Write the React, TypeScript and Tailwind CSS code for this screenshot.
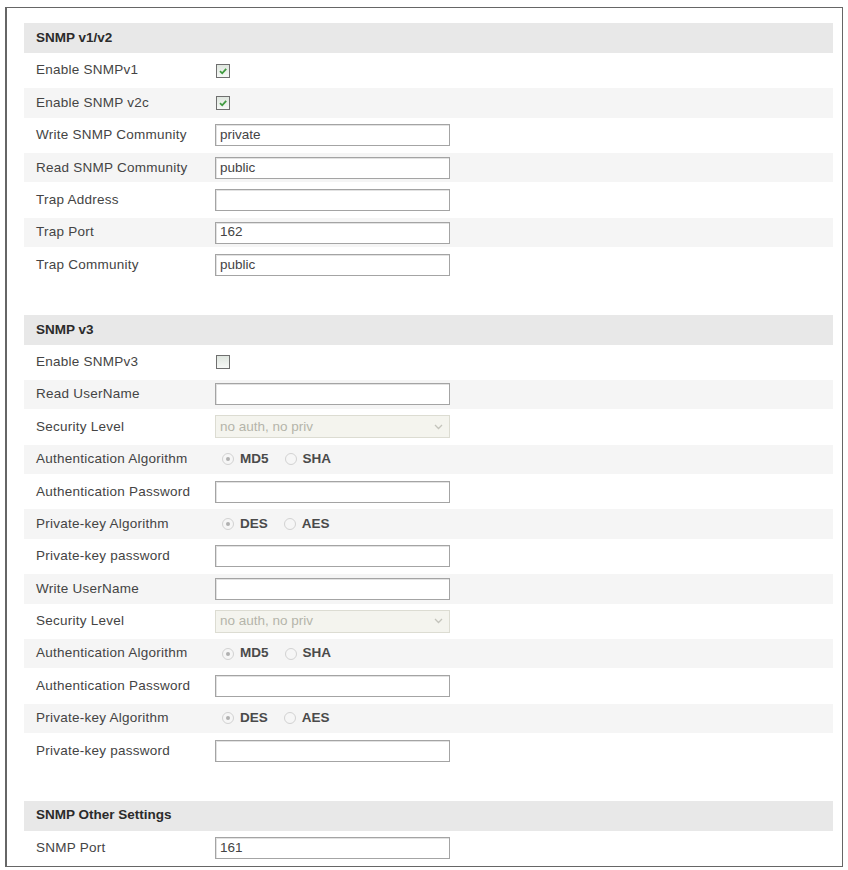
type Field =
  | { kind: "check"; label: string; checked: boolean }
  | { kind: "text"; label: string; value?: string }
  | { kind: "select"; label: string; value: string }
  | { kind: "radio"; label: string; options: [string, string] };

type Section = { title: string; fields: Field[] };

const sections: Section[] = [
  {
    title: "SNMP v1/v2",
    fields: [
      { kind: "check", label: "Enable SNMPv1", checked: true },
      { kind: "check", label: "Enable SNMP v2c", checked: true },
      { kind: "text", label: "Write SNMP Community", value: "private" },
      { kind: "text", label: "Read SNMP Community", value: "public" },
      { kind: "text", label: "Trap Address" },
      { kind: "text", label: "Trap Port", value: "162" },
      { kind: "text", label: "Trap Community", value: "public" },
    ],
  },
  {
    title: "SNMP v3",
    fields: [
      { kind: "check", label: "Enable SNMPv3", checked: false },
      { kind: "text", label: "Read UserName" },
      { kind: "select", label: "Security Level", value: "no auth, no priv" },
      { kind: "radio", label: "Authentication Algorithm", options: ["MD5", "SHA"] },
      { kind: "text", label: "Authentication Password" },
      { kind: "radio", label: "Private-key Algorithm", options: ["DES", "AES"] },
      { kind: "text", label: "Private-key password" },
      { kind: "text", label: "Write UserName" },
      { kind: "select", label: "Security Level", value: "no auth, no priv" },
      { kind: "radio", label: "Authentication Algorithm", options: ["MD5", "SHA"] },
      { kind: "text", label: "Authentication Password" },
      { kind: "radio", label: "Private-key Algorithm", options: ["DES", "AES"] },
      { kind: "text", label: "Private-key password" },
    ],
  },
  {
    title: "SNMP Other Settings",
    fields: [{ kind: "text", label: "SNMP Port", value: "161" }],
  },
];

function Checkbox({ checked }: { checked: boolean }) {
  return (
    <div className="ml-[1px] flex h-[14px] w-[14px] items-center justify-center border border-[#6f6f6f] bg-gradient-to-b from-[#dfe6df] to-[#f6f8f6]">
      {checked && (
        <svg width="10" height="10" viewBox="0 0 10 10">
          <path d="M2 5.2 L4.2 7.3 L8.2 2.8" fill="none" stroke="#3f9a3f" strokeWidth="1.8" />
        </svg>
      )}
    </div>
  );
}

function Radio({ on }: { on: boolean }) {
  return (
    <div className="flex h-[12px] w-[12px] items-center justify-center rounded-full border border-[#d2d2d2] bg-[#f6f6f6]">
      {on && <div className="h-[4px] w-[4px] rounded-full bg-[#b0b0b0]" />}
    </div>
  );
}

function Control({ field }: { field: Field }) {
  switch (field.kind) {
    case "check":
      return <Checkbox checked={field.checked} />;
    case "text":
      return (
        <div className="flex h-[22px] w-[235px] items-center border border-[#a4a4a4] bg-white px-[4px] text-[#444] shadow-[inset_1px_1px_0_#e2e2e2]">
          {field.value}
        </div>
      );
    case "select":
      return (
        <div className="flex h-[23px] w-[235px] items-center justify-between border border-[#dcdcd2] bg-[#f4f4ee] pl-[4px] pr-[6px] text-[#b4b4aa]">
          <span>{field.value}</span>
          <svg width="9" height="6" viewBox="0 0 9 6">
            <path d="M1 1 L4.5 4.5 L8 1" fill="none" stroke="#c4c4bc" strokeWidth="1.3" />
          </svg>
        </div>
      );
    case "radio":
      return (
        <div className="flex items-center pl-[7px] font-bold text-[#4a4a4a]">
          <Radio on />
          <span className="ml-[6px]">{field.options[0]}</span>
          <div className="ml-[16px]">
            <Radio on={false} />
          </div>
          <span className="ml-[6px]">{field.options[1]}</span>
        </div>
      );
  }
}

function FieldRow({ field, shaded }: { field: Field; shaded: boolean }) {
  return (
    <div className="h-[32.4px] py-[1.5px]">
      <div className={`flex h-full items-center ${shaded ? "bg-[#f5f5f5]" : "bg-white"}`}>
        <div className="w-[191px] shrink-0 pl-[12px] tracking-[0.25px] text-[#444]">{field.label}</div>
        <Control field={field} />
      </div>
    </div>
  );
}

export default function App() {
  return (
    <div className="min-h-[870px] bg-white pl-[5px] pr-[5px] pt-[7px] font-['Liberation_Sans',Arial,sans-serif] text-[13.5px]">
      <div className="h-[860px] border border-l-2 border-[#666] pl-[17px] pr-[9px] pt-[14px]">
        {sections.map((section, si) => (
          <div key={section.title}>
            {si > 0 && <div className="h-[32.4px]" />}
            <div className="h-[32.4px] py-[1.2px]">
              <div className="flex h-full items-center bg-[#e8e8e8] pl-[12px] font-bold text-[#2b2b2b]">
                {section.title}
              </div>
            </div>
            {section.fields.map((field, i) => (
              <FieldRow key={i} field={field} shaded={i % 2 === 1} />
            ))}
          </div>
        ))}
      </div>
    </div>
  );
}
